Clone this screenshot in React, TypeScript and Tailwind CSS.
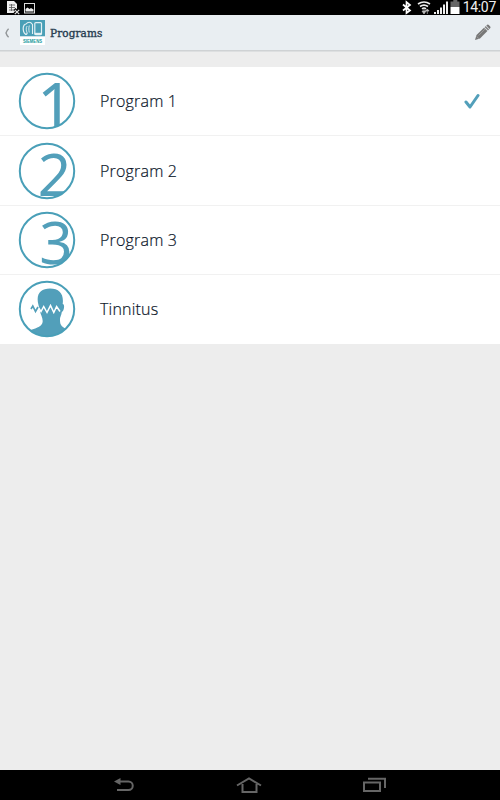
import { useState } from 'react'

const programs = [
  { id: 1, name: 'Program 1', digit: '1', digitX: 19.1, digitY: 56.7, digitSize: 64, rowClass: 'h-[69px]' },
  { id: 2, name: 'Program 2', digit: '2', digitX: 19.8, digitY: 53.5, digitSize: 58.5, rowClass: 'h-[70px]' },
  { id: 3, name: 'Program 3', digit: '3', digitX: 21.3, digitY: 53.3, digitSize: 58.5, rowClass: 'h-[69px]' },
  { id: 4, name: 'Tinnitus', digit: null, digitX: 0, digitY: 0, digitSize: 0, rowClass: 'h-[69px]' },
]

function StatusBar() {
  return (
    <div className="flex h-[15px] shrink-0 items-center justify-between bg-black pl-[7px] pr-1">
      <div className="flex items-center gap-[4px]">
        <svg width="13" height="15" viewBox="0 0 13 15">
          <path d="M0 1h7l3 3v5L7 13H0z" fill="#eee" />
          <path d="M2 5h6M2 7.5h6M2 10h5M4.5 4v7" stroke="#555" strokeWidth="0.8" />
          <path d="M7.5 9l5 5M12.5 9l-5 5" stroke="#000" strokeWidth="3" />
          <path d="M7.8 9.8l4.4 4.4M12.2 9.8l-4.4 4.4" stroke="#ddd" strokeWidth="1.2" />
        </svg>
        <svg width="11" height="15" viewBox="0 0 11 15">
          <rect x="0.5" y="3.5" width="10" height="9.5" fill="none" stroke="#ddd" />
          <path d="M1.5 11.5V9l2-1.5 2 1.5L7 8l2.5 1.5v2z" fill="#eee" />
        </svg>
      </div>
      <div className="flex items-center">
        <svg width="62" height="15" viewBox="0 0 62 15">
          <path d="M3 4.5l7 6L6.500 13V2L10 5l-7 5.500" fill="none" stroke="#fff" strokeWidth="1.7" />
          <g fill="none" stroke="#eee" strokeWidth="1.7">
            <path d="M18 4q6-4 12 0" />
            <path d="M20 6.5q4-2.8 8 0" />
            <path d="M22 8.9q2-1.4 4 0" />
          </g>
          <path d="M22 11h4l-2 3zM24 11V8M25.5 11h3.6l-1.8-2zM27.3 10v4" fill="#bbb" stroke="#bbb" strokeWidth="0.7" />
          <path
            d="M34 12h2v2h-2zM37 10h2v4h-2zM40 7.5h2V14h-2zM43 4.500h2V14h-2zM46 1.5h2V14h-2z"
            fill="#eee"
          />
          <path d="M53.3 0h4v1.500h2.200V7h-9V1.500h2.800z" fill="#666" />
          <path d="M50.5 7h9v7h-9z" fill="#fff" />
        </svg>
        <span className="h-[15px] w-[34px] whitespace-nowrap text-right font-['Roboto',sans-serif] text-[14px] leading-[15px] tracking-[-0.3px] text-[#eee]">
          14:07
        </span>
      </div>
    </div>
  )
}

function AppLogo() {
  return (
    <svg width="25" height="25" viewBox="0 0 25 25">
      <path d="M0 0h25v16.5H0z" fill="#4a9fb6" />
      <path d="M0 16.5h25V25H0z" fill="#fff" />
      <g fill="none" stroke="#e4f1f4">
        <path d="M5.500 4C3 5 2.800 9 3.600 11.500S6.500 15.500 7.200 13" strokeWidth="1.2" />
        <path d="M5.500 4.500Q9.500 0 12.500 4.500V14" strokeWidth="1.1" />
        <path d="M7.200 6C5.800 7.500 6 10.500 7.200 13M9.300 5.500c-.6 2-.6 5 0 7" strokeWidth="0.9" />
        <rect x="14.8" y="2.6" width="6.7" height="12" rx="1" strokeWidth="1.2" />
        <path d="M14.5 13.7h7" strokeWidth="1.8" />
      </g>
      <text
        x="12.5"
        y="22.5"
        textAnchor="middle"
        textLength="19"
        lengthAdjust="spacingAndGlyphs"
        fontFamily="'Liberation Sans', sans-serif"
        fontWeight="bold"
        fontSize="4.5"
        fill="#169a9c"
      >
        SIEMENS
      </text>
    </svg>
  )
}

function Header() {
  return (
    <header className="flex h-9 shrink-0 items-center border-b border-[#cfd2d4] bg-[#e9eef2] shadow-[0_1px_0_#dddfe0]">
      <svg className="ml-1 mr-[10px]" width="6" height="10" viewBox="0 0 6 10">
        <path d="M4.6 0.8Q2.8 2.5 2 5q.8 2.5 2.6 4.2" fill="none" stroke="#929699" strokeWidth="1.4" />
      </svg>
      <AppLogo />
      <h1 className="ml-[5px] font-['DejaVu_Serif',serif] text-[10.5px] font-normal leading-4 tracking-[0.08px] text-[#263c50] [-webkit-text-stroke:0.35px_#263c50]">
        Programs
      </h1>
      <svg className="ml-auto mr-[9px]" width="17" height="17" viewBox="0 0 17 17">
        <path d="M1 16l1.5-5L10 3.7l3.4 3.4L6 14.5z" fill="#777" />
        <path d="M10.5 3.200l1.300-1.200 3.400 3.400-1.300 1.200z" fill="#888" />
        <path d="M12.300 1.500l.9-.7q.8-.6 1.600.2l1.400 1.400q.7.8.1 1.600l-.8.9z" fill="#777" />
        <path d="M4.500 11.500l6.500-6.400" stroke="#aaa" strokeWidth="0.7" />
        <path d="M2.400 12.200l2.500 2.400" stroke="#bbb" strokeWidth="0.6" />
      </svg>
    </header>
  )
}

function ProgramIcon({ program }: { program: (typeof programs)[number] }) {
  const clipId = `clip-${program.id}`

  return (
    <svg width="58" height="58" viewBox="0 0 58 58">
      <clipPath id={clipId}>
        <circle cx="29" cy="29" r="27.5" />
      </clipPath>
      <g clipPath={`url(#${clipId})`}>
        {program.digit ? (
          <text
            x={program.digitX}
            y={program.digitY}
            fontFamily="'Noto Sans', sans-serif"
            fontSize={program.digitSize}
            fill="#529fba"
          >
            {program.digit}
          </text>
        ) : (
          <>
            <path
              d="M20.5 25C17.5 14 22.500 8.500 32 8.500C41.500 8.500 46 14 44.700 24C47.200 24 46 31.500 43.800 32C43.300 36 42 36.500 42 40C42 46 44 47 52 51V58H6V53C13 48.500 24.700 48.500 24.700 41C24.700 37.500 22.500 34.500 21.500 29.500Z"
              fill="#529fba"
            />
            <path
              d="M20 27l3 4.500 2.700-5 3.300 6 3.500-7 3.300 7 2.800-6 3.400 5"
              fill="none"
              stroke="#fff"
              strokeWidth="1.5"
            />
            <path d="M13 29l1.800-3 2.700 5.500 2.500-4.500" fill="none" stroke="#529fba" strokeWidth="1.7" />
          </>
        )}
      </g>
      <circle cx="29" cy="29" r="27.2" fill="none" stroke="#499fb8" strokeWidth="2" />
    </svg>
  )
}

function NavBar() {
  return (
    <nav className="flex h-[30px] shrink-0 items-center justify-between bg-black pl-[113px] pr-[114px]">
      <svg width="22" height="16" viewBox="0 0 22 16">
        <path d="M5 4.5h10.5a4.2 4.2 0 0 1 0 8.500H4" fill="none" stroke="#666" strokeWidth="2" />
        <path d="M1 4.500L7.500 1v7z" fill="#666" />
      </svg>
      <svg width="26" height="18" viewBox="0 0 26 18">
        <path d="M1 9.5L13 2.5l12 7M6.500 8v8h14V8" fill="none" stroke="#666" strokeWidth="2" />
      </svg>
      <svg width="23" height="16" viewBox="0 0 23 16">
        <path d="M1 5.500h16v8.500H1zM5 1.700h17v9.300" fill="none" stroke="#666" strokeWidth="2" />
      </svg>
    </nav>
  )
}

export default function App() {
  const [activeId, setActiveId] = useState(1)

  return (
    <div className="flex h-[800px] w-[500px] flex-col overflow-hidden bg-[#ededed]">
      <StatusBar />
      <Header />

      <main className="flex-1 pt-4">
        <ul className="flex flex-col bg-white">
          {programs.map((program) => (
            <li key={program.id} className={`border-b border-[#f1f1f1] last:border-white ${program.rowClass}`}>
              <button
                className="flex h-full w-full items-center pl-[18px] pr-5 text-left"
                onClick={() => setActiveId(program.id)}
              >
                <ProgramIcon program={program} />
                <span className="ml-6 font-['Open_Sans','Noto_Sans',sans-serif] text-[16px] font-light tracking-[0.2px] text-[#0a1528] [-webkit-text-stroke:0.2px_#0a1528]">
                  {program.name}
                </span>
                {program.id === activeId && (
                  <svg className="ml-auto" width="16" height="16" viewBox="0 0 16 16">
                    <path d="M2 9l4 5L14 2.5" fill="none" stroke="#529fba" strokeWidth="3" strokeLinecap="round" strokeLinejoin="round" />
                  </svg>
                )}
              </button>
            </li>
          ))}
        </ul>
      </main>

      <NavBar />
    </div>
  )
}
